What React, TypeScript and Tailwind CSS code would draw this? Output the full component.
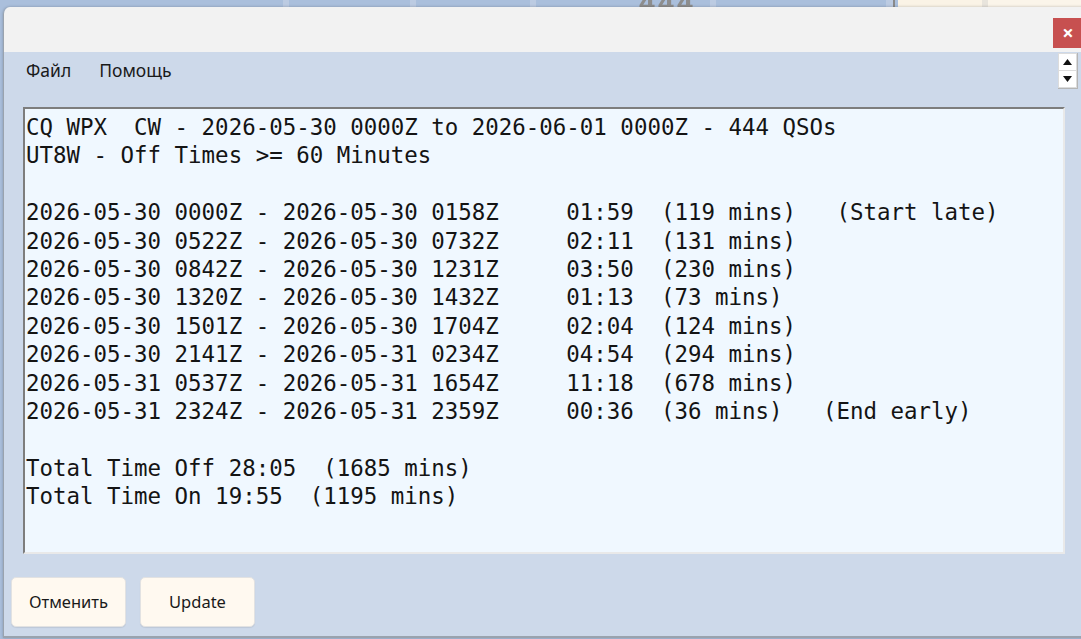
const REPORT = `CQ WPX  CW - 2026-05-30 0000Z to 2026-06-01 0000Z - 444 QSOs
UT8W - Off Times >= 60 Minutes

2026-05-30 0000Z - 2026-05-30 0158Z     01:59  (119 mins)   (Start late)
2026-05-30 0522Z - 2026-05-30 0732Z     02:11  (131 mins)
2026-05-30 0842Z - 2026-05-30 1231Z     03:50  (230 mins)
2026-05-30 1320Z - 2026-05-30 1432Z     01:13  (73 mins)
2026-05-30 1501Z - 2026-05-30 1704Z     02:04  (124 mins)
2026-05-30 2141Z - 2026-05-31 0234Z     04:54  (294 mins)
2026-05-31 0537Z - 2026-05-31 1654Z     11:18  (678 mins)
2026-05-31 2324Z - 2026-05-31 2359Z     00:36  (36 mins)   (End early)

Total Time Off 28:05  (1685 mins)
Total Time On 19:55  (1195 mins)`;

function SpinButtons() {
  return (
    <div className="flex flex-col gap-px border-r border-b border-[#b5b5b5] bg-[#dcdcdc] p-px">
      <button type="button" className="flex h-[16px] w-[17px] items-center justify-center bg-white">
        <svg width="9" height="6" viewBox="0 0 9 6">
          <path d="M0 6 L4.5 0 L9 6 Z" fill="#111" />
        </svg>
      </button>
      <button type="button" className="flex h-[16px] w-[17px] items-center justify-center bg-white">
        <svg width="9" height="6" viewBox="0 0 9 6">
          <path d="M0 0 L9 0 L4.5 6 Z" fill="#111" />
        </svg>
      </button>
    </div>
  );
}

function DialogButton({ label }: { label: string }) {
  return (
    <button
      type="button"
      className="h-[50px] w-[115px] rounded-[5px] border border-[#e2e2e2] bg-[#fff9f0] text-[16.5px] text-[#1a1a1a] shadow-[0_1px_1px_rgba(0,0,0,0.08)]"
    >
      {label}
    </button>
  );
}

export default function App() {
  return (
    <div
      className="relative h-[639px] w-[1081px] overflow-hidden bg-[#aabfdc]"
      style={{ fontFamily: '"Noto Sans", "Liberation Sans", sans-serif' }}
    >
      {/* desktop behind the dialog */}
      <div className="flex h-[17px] w-full">
        <div className="w-[289px] border-r-[6px] border-[#bccbe2]" />
        <div className="w-[127px] border-r-[6px] border-[#bccbe2]" />
        <div className="w-[120px] border-r-[6px] border-[#bccbe2]" />
        <div className="relative w-[180px] border-r-[6px] border-[#bccbe2]">
          <span className="absolute -top-[13px] left-[103px] text-[28px] font-bold leading-none tracking-[3px] text-[#8d8d8d] blur-[0.6px]">
            444
          </span>
        </div>
        <div className="w-[177px] border-r-[7px] border-[#bccbe2]" />
        <div className="w-[5px] border-l-2 border-[#8a8a8a]" />
        <div className="w-[90px] border-r-[6px] border-[#e8e4dc] bg-[#faf3e6]" />
        <div className="flex-1 bg-[#fbf5ea]" />
      </div>

      <div className="absolute left-[3px] top-[7px] flex h-[631px] w-[1080px] flex-col overflow-hidden rounded-tl-[7px] border-l border-b-2 border-[#9aa3ae] shadow-[0_0_3px_rgba(0,0,0,0.25)]">
        {/* title bar */}
        <div className="flex h-[45px] shrink-0 items-start justify-end bg-[#f2f2f2]">
          <button
            type="button"
            className="mt-[11px] flex h-[30px] w-[30px] items-center justify-center bg-[#c75050] text-[20px] font-bold leading-none text-white"
          >
            ×
          </button>
        </div>

        {/* client area */}
        <div className="flex flex-1 flex-col bg-[#cdd9ea]">
          <div className="flex h-[38px] items-start justify-between">
            <div className="flex gap-[28px] pl-[22px] pt-[5px] text-[17.5px] text-[#1a1a1a]">
              <span>Файл</span>
              <span>Помощь</span>
            </div>
            <div className="mr-[5px] mt-px">
              <SpinButtons />
            </div>
          </div>

          <div className="ml-[19px] mt-[17px] h-[447px] w-[1042px] border-2 border-t-[#7d7d7d] border-l-[#7d7d7d] border-b-[#e9e9e9] border-r-[#e9e9e9] bg-[#f0f8ff]">
            <pre
              className="whitespace-pre pl-px pt-[4px] text-[22.45px] leading-[28.4px] text-[#141414]"
              style={{ fontFamily: '"DejaVu Sans Mono", "Liberation Mono", monospace' }}
            >
              {REPORT}
            </pre>
          </div>

          <div className="ml-[7px] mt-[23px] flex gap-[14px]">
            <DialogButton label="Отменить" />
            <DialogButton label="Update" />
          </div>
        </div>
      </div>
    </div>
  );
}
